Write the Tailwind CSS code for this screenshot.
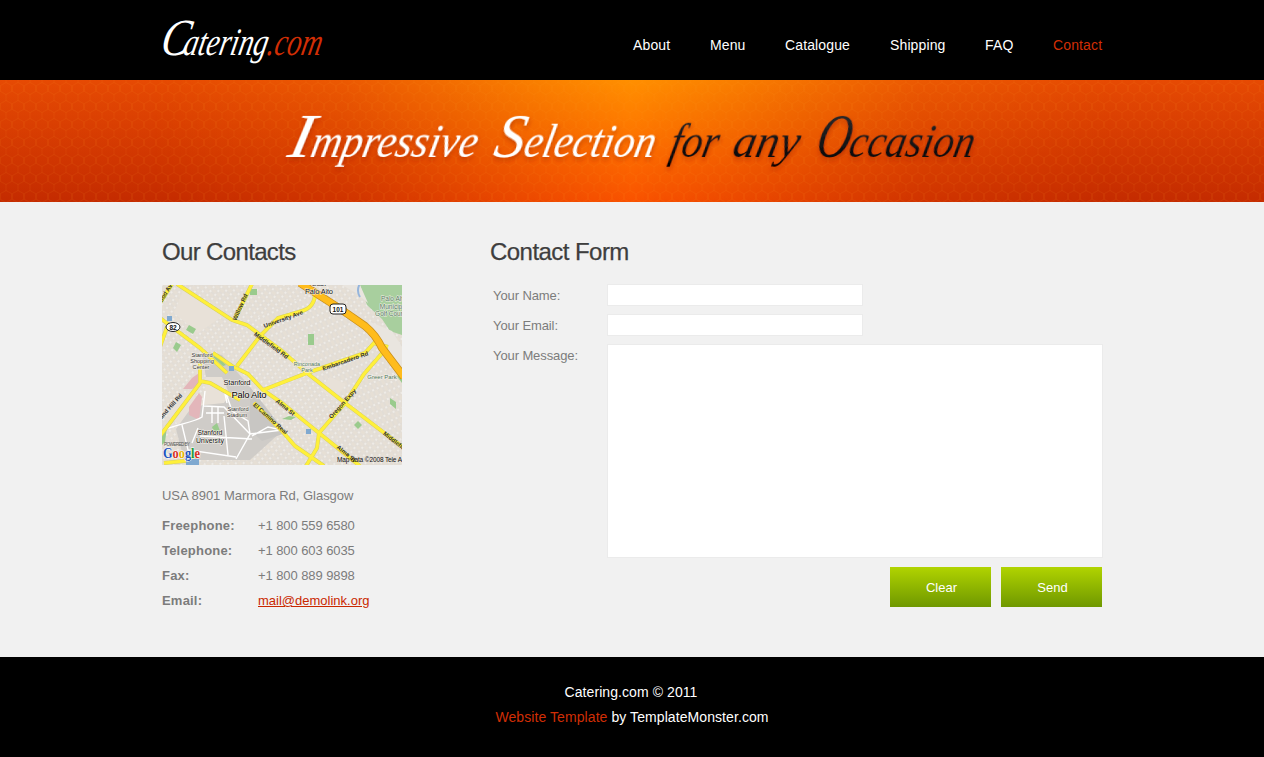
<!DOCTYPE html>
<html lang="en">
<head>
<meta charset="utf-8">
<title>Catering.com - Contact</title>
<script src="https://cdn.jsdelivr.net/npm/@tailwindcss/browser@4"></script>
</head>
<body class="bg-black font-['Liberation_Sans',Arial,sans-serif] text-[13px] text-[#7c7c7c]">
<div class="flex h-[757px] flex-col overflow-hidden">
<header class="h-20 shrink-0 bg-black">
  <div class="mx-auto flex h-full w-[940px] items-start justify-between">
    <svg class="h-20 w-[170px] overflow-visible" viewBox="0 0 170 80" font-family="Liberation Serif, serif" font-style="italic" aria-label="Catering.com">
      <g transform="translate(0 55) skewX(-12)">
        <text x="-3" y="0" font-size="52" fill="#fff" textLength="28" lengthAdjust="spacingAndGlyphs">C</text>
        <text x="20" y="0" font-size="39" fill="#fff" textLength="84" lengthAdjust="spacingAndGlyphs">atering</text>
        <text x="104" y="0" font-size="39" fill="#d12e05" textLength="54" lengthAdjust="spacingAndGlyphs">.com</text>
      </g>
    </svg>
    <nav class="flex gap-10 pt-[35px] text-[14px] leading-5 tracking-[0.13px] text-white">
      <a class="w-[37px] whitespace-nowrap">About</a><a class="w-[35px] whitespace-nowrap">Menu</a><a class="w-[65px] whitespace-nowrap">Catalogue</a><a class="w-[55px] whitespace-nowrap">Shipping</a><a class="w-7 whitespace-nowrap">FAQ</a><a class="w-[49px] whitespace-nowrap text-[#d12e05]">Contact</a>
    </nav>
  </div>
</header>
<section class="h-[122px] shrink-0">
  <svg class="block h-[122px] w-full" viewBox="0 0 1264 122" font-family="Liberation Serif, serif" font-style="italic">
    <defs>
      <linearGradient id="side" x1="0" y1="0" x2="0" y2="1"><stop offset="0" stop-color="#e64a03"/><stop offset="1" stop-color="#c42b00"/></linearGradient>
      <linearGradient id="mid" x1="0" y1="0" x2="0" y2="1"><stop offset="0" stop-color="#ff9000"/><stop offset=".5" stop-color="#fd7200"/><stop offset="1" stop-color="#f95200"/></linearGradient>
      <linearGradient id="fade"><stop offset="0" stop-color="#000"/><stop offset=".2" stop-color="#383838"/><stop offset=".4" stop-color="#c4c4c4"/><stop offset=".5" stop-color="#fff"/><stop offset=".6" stop-color="#c4c4c4"/><stop offset=".8" stop-color="#383838"/><stop offset="1" stop-color="#000"/></linearGradient>
      <mask id="glow"><rect x="152" width="960" height="122" fill="url(#fade)"/></mask>
      <linearGradient id="ink" gradientUnits="userSpaceOnUse" x1="0" y1="-45" x2="0" y2="14"><stop offset="0" stop-color="#2c2c2c"/><stop offset="1" stop-color="#000"/></linearGradient>
      <pattern id="hex" width="12" height="18" patternUnits="userSpaceOnUse">
        <path d="M6 2.500L11.500 5.500V11.500L6 14.500.5 11.500V5.500zM6 14.500V18M6 0V2.500" fill="none" stroke="#ff9a20" stroke-opacity=".09"/>
      </pattern>
      <filter id="shade" x="-5%" y="-20%" width="110%" height="150%"><feDropShadow dx="1" dy="3" stdDeviation="2" flood-color="#a01c00" flood-opacity=".5"/></filter>
    </defs>
    <rect width="1264" height="122" fill="url(#side)"/>
    <rect width="1264" height="122" fill="url(#mid)" mask="url(#glow)"/>
    <rect width="1264" height="122" fill="url(#hex)"/>
    <g transform="translate(0 77) skewX(-12)" filter="url(#shade)">
      <g fill="#fff">
        <text x="286" font-size="62" textLength="24" lengthAdjust="spacingAndGlyphs">I</text>
        <text x="309" font-size="48" textLength="166" lengthAdjust="spacingAndGlyphs">mpressive</text>
        <text x="492" font-size="62" textLength="30" lengthAdjust="spacingAndGlyphs">S</text>
        <text x="522" font-size="48" textLength="131" lengthAdjust="spacingAndGlyphs">election</text>
      </g>
      <g fill="url(#ink)">
        <text x="668" font-size="48" textLength="48" lengthAdjust="spacingAndGlyphs">for</text>
        <text x="731" font-size="48" textLength="66" lengthAdjust="spacingAndGlyphs">any</text>
        <text x="814" font-size="62" textLength="34" lengthAdjust="spacingAndGlyphs">O</text>
        <text x="847" font-size="48" textLength="125" lengthAdjust="spacingAndGlyphs">ccasion</text>
      </g>
    </g>
  </svg>
</section>
<main class="h-[455px] shrink-0 bg-[#f1f1f1]">
  <div class="mx-auto flex w-[940px] gap-[88px] pt-9">
    <section class="w-60 shrink-0">
      <h2 class="h-[47px] text-[24px] leading-7 tracking-[-0.65px] whitespace-nowrap text-[#3e3e3e] [-webkit-text-stroke:0.25px_#3e3e3e]">Our Contacts</h2>
      <svg class="block h-[180px] w-60" viewBox="0 0 240 180" font-family="Liberation Sans, Arial, sans-serif">
        <defs>
          <pattern id="blocks" width="6" height="5" patternUnits="userSpaceOnUse" patternTransform="rotate(38)"><rect width="6" height="5" fill="#fbf9f6"/><rect x=".5" y=".5" width="5" height="4" fill="#c9c1b6"/><rect x="1" y="1" width="4" height="3" fill="#e6dfd5"/></pattern>
          <pattern id="blocks2" width="5" height="7" patternUnits="userSpaceOnUse" patternTransform="rotate(-24)"><rect width="5" height="7" fill="#fbf9f6"/><rect x=".5" y=".5" width="4" height="6" fill="#c9c1b6"/><rect x="1" y="1" width="3" height="5" fill="#e6dfd5"/></pattern>
          <path id="r101" d="M138-2L180 25 203 41Q214 50 220 63L242 92"/>
          <path id="roads" d="M15-1L70 35 85 40 120 66 145 88 183 118 242 163M-2 33L38 63 65 88M92 118L120 146 133 161 162 181M51 68L70 81 86 89 101 105 120 118 157 148 198 181M75 81L98 51 116 33 140 26Q153 22 153 8M90-1L73 33M101 105L145 88 203 68 212 58 226 62M222 66L202 89 183 118 157 148 155 163 144 181M-2 151L38 98V78M38 96L48 98 78 115M-2 18L10-1M-2 62L5 42M2 178L32 175"/>
        </defs>
        <rect width="240" height="180" fill="url(#blocks)"/>
        <path d="M90 44L148 88 240 165V90L205 42 150 8 98 30z" fill="url(#blocks2)"/>
        <path d="M22 3L62 30 36 48 12 28zM168 92L184 99 172 116 158 104zM2 128L26 106 42 120 20 142z" fill="#e8e1d8"/>
        <path d="M40 66L60 70 84 97 120 146 88 175H22L14 144 27 126 45 118 45 100z" fill="#cfccc8"/>
        <path d="M88 102L124 148 100 156 88 145z" fill="#c8c6c3"/>
        <path d="M44 92L60 92 68 110 62 118 42 120z" fill="#e8e1d8"/>
        <path d="M21 104L30 93 37 88V100L30 104zM27 122L37 108 40 112 37 135 27 130z" fill="#e3b6ba"/>
        <path d="M198 0H240V50L228 46 220 34 205 20z" fill="#a8cf9e"/>
        <path d="M206 36L230 46 240 62V88L214 54z" fill="#e9e5df"/>
        <path d="M180 0H198L206 18 194 8z" fill="#e9e5df"/>
        <path d="M198-2Q194 6 198 12" fill="none" stroke="#95b5dc" stroke-width="2"/>
        <g fill="#9acb8d"><path d="M27 40l7 4-3 5-7-4zM14 57l5 3-4 7-4-4zM88 4h7v6h-7zM146 49h6v11h-6zM192 140l4-4 4 4-4 4zM54 70l10 10-3 1-10-9zM50 142l5-4 3 8-6 1zM-1 148l6-6-2 15-4 4zM228 113l6 4v7l-6-5zM120 134l7-3 7 1-5 3zM234 90h6v8z"/></g>
        <g fill="none" stroke="#fff" stroke-width="1.400"><path d="M-1 146C14 139 31 138 40 132L43 106M48 98L62 104 65 118M42 121L62 122 88 149 120 145M63 105L70 126 86 136 88 149 74 174M20 140L26 165 74 172M36 143L30 158M62 131L66 170M38 151L90 154M90 151L106 142 120 145M44 128H62M50 121V138M56 121V138"/></g>
        <use href="#roads" fill="none" stroke="#d6cf60" stroke-width="4"/>
        <use href="#roads" fill="none" stroke="#fff03a" stroke-width="3"/>
        <use href="#r101" fill="none" stroke="#c98f1b" stroke-width="8"/>
        <use href="#r101" fill="none" stroke="#ffbc1c" stroke-width="6.400"/>
        <g fill="#7fa9d0"><path d="M5 31h5v5H5zM67 81h5v5h-5zM144 144h5v5h-5zM24 174h13v6H24z"/></g>
        <g fill="#fff" stroke="#222"><ellipse cx="11" cy="42" rx="7" ry="4.500"/><rect x="168" y="19" width="16" height="10" rx="3"/></g>
        <g font-size="6.500" font-weight="bold" fill="#111" text-anchor="middle"><text x="11" y="44.500">82</text><text x="176" y="26.500">101</text></g>
        <g fill="#333" font-size="6" text-anchor="middle" stroke="#f3efe8" stroke-width="1" paint-order="stroke">
          <text x="157" y="1" font-size="7">East</text>
          <text x="157" y="9" font-size="7.500" fill="#111" textLength="28">Palo Alto</text>
          <g font-size="5.600"><text x="40" y="72">Stanford</text><text x="40" y="78">Shopping</text><text x="39" y="84">Center</text><text x="76" y="126">Stanford</text><text x="75" y="132">Stadium</text></g>
          <text x="75" y="100" font-size="7.500" fill="#111" textLength="27">Stanford</text>
          <text x="87" y="113" font-size="9.500" fill="#000" textLength="35">Palo Alto</text>
          <g fill="#111"><text x="48" y="150" font-size="7" textLength="25">Stanford</text><text x="48" y="158" font-size="7" textLength="28">University</text></g>
          <g fill="#50795c" font-size="6.500"><text x="230" y="16">Palo Alt</text><text x="229" y="24">Municip</text><text x="227" y="31">Golf Cour</text><text x="145" y="81" font-size="5.500">Rinconada</text><text x="145" y="87" font-size="5.500">Park</text><text x="220" y="94" font-size="6">Greer Park</text></g>
          <g font-size="6" font-weight="bold" stroke="none">
            <text transform="translate(80 23) rotate(-66)">Willow Rd</text>
            <text transform="translate(108 62) rotate(36)">Middlefield Rd</text>
            <text transform="translate(122 36) rotate(-20)">University Ave</text>
            <text transform="translate(184 78) rotate(-19)">Embarcadero Rd</text>
            <text transform="translate(182 120) rotate(-48)">Oregon Expy</text>
            <text transform="translate(107 135) rotate(42)">El Camino Real</text>
            <text transform="translate(122 124) rotate(39)">Alma St</text>
            <text transform="translate(183 170) rotate(38)">Alma St</text>
            <text transform="translate(233 159) rotate(38)">Middlefield</text>
            <text transform="translate(9 124) rotate(-48)">Sand Hill Rd</text>
            <text transform="translate(4 11) rotate(-58)">wood Av</text>
          </g>
        </g>
        <text x="2" y="161" font-size="4.500" fill="#555" textLength="26">POWERED BY</text>
        <text x="1" y="173" font-size="14" font-family="Liberation Serif, serif" font-weight="bold" textLength="37" lengthAdjust="spacingAndGlyphs" stroke="#fff" stroke-width="1" paint-order="stroke"><tspan fill="#1b53c0">G</tspan><tspan fill="#d8301f">o</tspan><tspan fill="#e8b600">o</tspan><tspan fill="#1b53c0">g</tspan><tspan fill="#239b38">l</tspan><tspan fill="#d8301f">e</tspan></text>
        <text x="175" y="177" font-size="6.500" fill="#111" textLength="65">Map data ©2008 Tele A</text>
      </svg>
      <p class="pt-[21px] leading-5 tracking-[-0.03px] whitespace-nowrap">USA 8901 Marmora Rd, Glasgow</p>
      <dl class="grid grid-cols-[96px_1fr] pt-[7px] leading-[25px] whitespace-nowrap">
        <dt class="font-bold tracking-[0.2px]">Freephone:</dt><dd class="tracking-[-0.08px]">+1 800 559 6580</dd>
        <dt class="font-bold tracking-[0.2px]">Telephone:</dt><dd class="tracking-[-0.08px]">+1 800 603 6035</dd>
        <dt class="font-bold tracking-[0.2px]">Fax:</dt><dd class="tracking-[-0.08px]">+1 800 889 9898</dd>
        <dt class="font-bold tracking-[0.2px]">Email:</dt><dd><a class="text-[#c92800] underline">mail@demolink.org</a></dd>
      </dl>
    </section>
    <section class="w-[612px] shrink-0">
      <h2 class="h-[47px] text-[24px] leading-7 tracking-[-0.55px] whitespace-nowrap text-[#3e3e3e] [-webkit-text-stroke:0.25px_#3e3e3e]">Contact Form</h2>
      <form class="flex flex-col gap-[10px] pl-[3px]">
        <div class="flex h-5"><label class="w-[115px] shrink-0 pt-px leading-5 tracking-[-0.1px]">Your Name:</label><div class="h-5 w-[254px] bg-white outline outline-[#ebebeb]"></div></div>
        <div class="flex h-5"><label class="w-[115px] shrink-0 pt-px leading-5 tracking-[-0.1px]">Your Email:</label><div class="h-5 w-[254px] bg-white outline outline-[#ebebeb]"></div></div>
        <div class="flex h-[212px]"><label class="w-[115px] shrink-0 pt-px leading-5 tracking-[-0.1px]">Your Message:</label><div class="h-[212px] w-[494px] bg-white outline outline-[#ebebeb]"></div></div>
        <div class="flex justify-end gap-[10px] text-white">
          <button type="button" class="h-10 w-[101px] bg-linear-to-b from-[#b1d400] to-[#6f9800] pt-0.5 pl-0.5">Clear</button>
          <button type="button" class="h-10 w-[101px] bg-linear-to-b from-[#b1d400] to-[#6f9800] pt-0.5 pl-0.5">Send</button>
        </div>
      </form>
    </section>
  </div>
</main>
<footer class="flex h-[100px] shrink-0 flex-col items-center bg-black pt-[23px] text-[14px] leading-[25px] tracking-[0.08px] text-white">
  <p class="pr-0.5">Catering.com © 2011</p>
  <p><span class="text-[#d12e05]">Website Template</span> by TemplateMonster.com</p>
</footer>
</div>
</body>
</html>
